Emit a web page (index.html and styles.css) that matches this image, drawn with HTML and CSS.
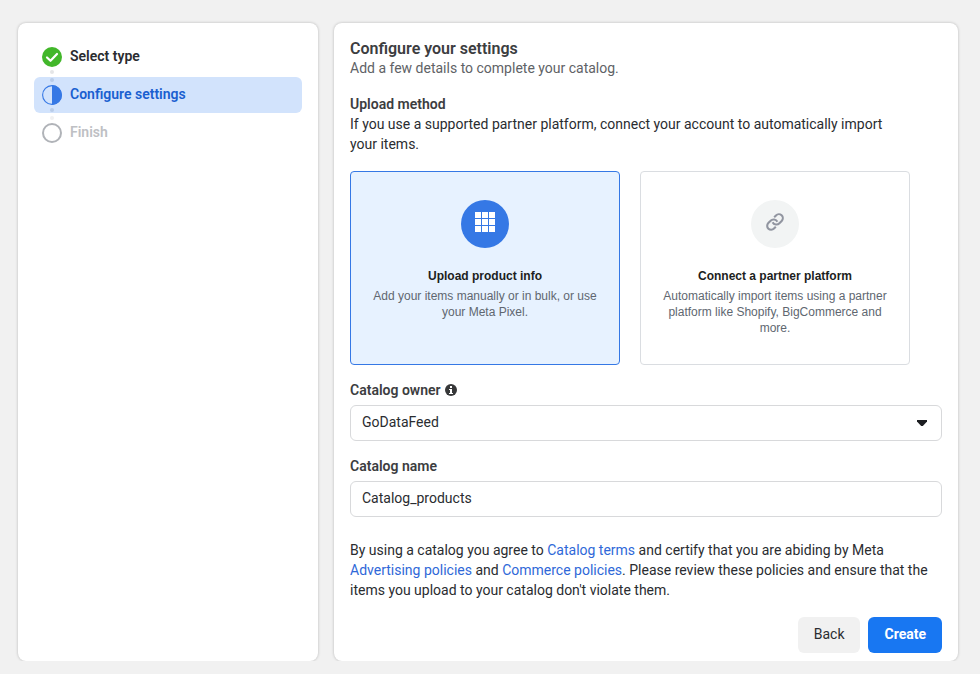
FILE: index.html
```html
<!DOCTYPE html>
<html lang="en">
<head>
<meta charset="UTF-8">
<meta name="viewport" content="width=device-width, initial-scale=1.0">
<title>Create catalog</title>
<link rel="stylesheet" href="styles.css">
</head>
<body>

<main class="page">
    <nav class="panel sidebar" aria-label="Progress">
        <ol class="steps">
            <li class="step">
                <span class="marker">
                    <span class="dot hidden"></span>
                    <svg width="20" height="20" viewBox="0 0 20 20" aria-hidden="true">
                        <circle cx="10" cy="10" r="10" fill="#42b72a"/>
                        <path d="M5 10.5 L8.5 13.8 L15 7" fill="none" stroke="#fff" stroke-width="2.2" stroke-linecap="round" stroke-linejoin="round"/>
                    </svg>
                    <span class="dot"></span>
                </span>
                <span class="step-name">Select type</span>
            </li>
            <li class="step current" aria-current="step">
                <span class="marker">
                    <span class="dot"></span>
                    <svg width="20" height="20" viewBox="0 0 20 20" aria-hidden="true">
                        <circle cx="10" cy="10" r="9.4" fill="none" stroke="#3578e5" stroke-width="1.1"/>
                        <path d="M10 0 A10 10 0 0 1 10 20 Z" fill="#3578e5"/>
                    </svg>
                    <span class="dot"></span>
                </span>
                <span class="step-name">Configure settings</span>
            </li>
            <li class="step upcoming">
                <span class="marker">
                    <span class="dot"></span>
                    <svg width="20" height="20" viewBox="0 0 20 20" aria-hidden="true">
                        <circle cx="10" cy="10" r="9" fill="#fff" stroke="#b0b3b8" stroke-width="2"/>
                    </svg>
                    <span class="dot hidden"></span>
                </span>
                <span class="step-name">Finish</span>
            </li>
        </ol>
    </nav>

    <form class="panel settings">
        <h1>Configure your settings</h1>
        <p class="subtitle">Add a few details to complete your catalog.</p>

        <section class="upload">
            <h2>Upload method</h2>
            <p>If you use a supported partner platform, connect your account to automatically import your items.</p>
            <div class="options">
                <label class="option">
                    <input type="radio" name="method" value="upload" checked>
                    <span class="option-icon">
                        <svg width="20" height="20" viewBox="0 0 20 20" fill="#fff" shape-rendering="crispEdges" aria-hidden="true">
                            <path d="M0 0h6v6H0z M7 0h6v6H7z M14 0h6v6h-6z M0 7h6v6H0z M7 7h6v6H7z M14 7h6v6h-6z M0 14h6v6H0z M7 14h6v6H7z M14 14h6v6h-6z"/>
                        </svg>
                    </span>
                    <span class="option-title">Upload product info</span>
                    <span class="option-text">Add your items manually or in bulk, or use your Meta Pixel.</span>
                </label>
                <label class="option">
                    <input type="radio" name="method" value="partner">
                    <span class="option-icon">
                        <svg width="20" height="20" viewBox="0 0 20 20" fill="none" stroke="#9195a0" stroke-width="2.1" aria-hidden="true">
                            <path d="M9.2 5.2 L11 3.4 A3.9 3.9 0 0 1 16.7 8.9 L14.4 11.2 A4.2 4.2 0 0 1 7.6 10.2"/>
                            <path d="M10.8 14.8 L9 16.6 A3.9 3.9 0 0 1 3.3 11.1 L5.6 8.8 A4.2 4.2 0 0 1 12.4 9.8"/>
                        </svg>
                    </span>
                    <span class="option-title">Connect a partner platform</span>
                    <span class="option-text">Automatically import items using a partner platform like Shopify, BigCommerce and more.</span>
                </label>
            </div>
        </section>

        <div class="field">
            <label for="catalogOwner">Catalog owner
                <svg class="info" width="12" height="12" viewBox="0 0 12 12" aria-hidden="true">
                    <circle cx="6" cy="6" r="6" fill="#373839"/>
                    <path d="M5 2h2v2H5z M4 5h3v4h1v1H4V9h1V6H4z" fill="#fff"/>
                </svg>
            </label>
            <div class="select">
                <select id="catalogOwner" name="catalogOwner">
                    <option>GoDataFeed</option>
                </select>
                <svg class="arrow" width="10" height="6" viewBox="0 0 10 6" aria-hidden="true">
                    <path d="M0 0h10v1.5L5.8 6H4.2L0 1.5z" fill="#1c1e21"/>
                </svg>
            </div>
        </div>

        <div class="field">
            <label for="catalogName">Catalog name</label>
            <input type="text" id="catalogName" name="catalogName" value="Catalog_products">
        </div>

        <p class="terms">By using a catalog you agree to <a href="#">Catalog terms</a> and certify that you are abiding by Meta <a href="#">Advertising policies</a> and <a href="#">Commerce policies</a>. Please review these policies and ensure that the items you upload to your catalog don't violate them.</p>

        <div class="actions">
            <button type="button">Back</button>
            <button type="submit" class="primary">Create</button>
        </div>
    </form>
</main>

</body>
</html>
```

FILE: styles.css
```css
* {
    box-sizing: border-box;
}
body {
    margin: 0;
    background-color: #f1f1f1;
    color: #2a2c30;
    font-family: Roboto, Arial, sans-serif;
    font-size: 14px;
    line-height: 20px;
}
h1, h2, p, ol {
    margin: 0;
    padding: 0;
}
h1, h2, .field label {
    color: #3c3d3f;
    font-size: 14px;
    font-weight: 600;
}
h1 {
    font-size: 16px;
    line-height: 19px;
}
a {
    color: #2f68d8;
    text-decoration: none;
}
a:hover {
    text-decoration: underline;
}

.page {
    display: grid;
    grid-template-columns: 300px 1fr;
    gap: 16px;
    padding: 23px 22px 0 18px;
    overflow: hidden;
}
.panel {
    padding: 16px 16px 8px;
    background-color: #fff;
    border-radius: 8px;
    box-shadow: 0 0 3px rgba(0, 0, 0, 0.25);
}

/* Steps */
.steps {
    display: grid;
    gap: 2px;
    list-style: none;
}
.step {
    display: flex;
    align-items: center;
    gap: 8px;
    padding: 0 8px;
    border-radius: 6px;
    font-weight: 600;
}
.step.current {
    background-color: #d2e3fc;
    color: #1a5fd0;
}
.step.upcoming {
    color: #bec0c4;
}
.step-name {
    padding-bottom: 2px;
}
.marker {
    display: flex;
    flex-direction: column;
    align-items: center;
    gap: 3px;
    padding: 1px 0;
}
.dot {
    width: 4px;
    height: 4px;
    border-radius: 50%;
    background-color: #e4e5e7;
}
.current .dot {
    background-color: #b9cce8;
}
.upcoming .dot {
    background-color: #f0f0f1;
}
.dot.hidden {
    visibility: hidden;
}

/* Settings */
.subtitle {
    color: #606266;
}
.upload {
    max-width: 560px;
    margin: 16px 0 15px;
}
.options {
    display: grid;
    grid-template-columns: 1fr 1fr;
    gap: 20px;
    margin-top: 17px;
}
.option {
    display: flex;
    flex-direction: column;
    align-items: center;
    padding: 28px 20px;
    border: 1px solid #dadde1;
    border-radius: 4px;
    text-align: center;
    cursor: pointer;
}
.option input {
    position: absolute;
    opacity: 0;
    pointer-events: none;
}
.option:has(input:checked) {
    border-color: #3578e5;
    background-color: #e7f2ff;
}
.option-icon {
    display: flex;
    justify-content: center;
    width: 48px;
    height: 48px;
    margin-bottom: 18px;
    padding-top: 12px;
    border-radius: 50%;
    background-color: #f2f4f4;
}
.option:has(input:checked) .option-icon {
    background-color: #3578e5;
}
.option-title {
    margin-bottom: 2px;
    color: #1c1e21;
    font-family: "Liberation Sans", Arial, sans-serif;
    font-size: 12px;
    font-weight: 700;
}
.option-text {
    color: #606770;
    font-family: "Liberation Sans", Arial, sans-serif;
    font-size: 12px;
    line-height: 16px;
}

.field {
    margin-bottom: 15px;
}
.field label {
    display: flex;
    align-items: center;
    gap: 4px;
    margin-bottom: 5px;
}
.field input, .field select {
    display: block;
    width: 100%;
    height: 36px;
    padding: 0 11px 2px;
    border: 1px solid #d8d9db;
    border-radius: 6px;
    background-color: #fff;
    color: #2a2c30;
    font: inherit;
    appearance: none;
}
.select {
    position: relative;
}
.arrow {
    position: absolute;
    top: 15px;
    right: 15px;
    pointer-events: none;
}

.terms {
    margin: 23px 0 17px;
}
.actions {
    display: flex;
    justify-content: flex-end;
    gap: 8px;
}
button {
    height: 36px;
    padding: 0 16px 2px;
    border: none;
    border-radius: 6px;
    background-color: #f1f1f1;
    color: #2a2c30;
    font: inherit;
    cursor: pointer;
}
button.primary {
    background-color: #1877f2;
    color: #fff;
    font-weight: 700;
}
```
